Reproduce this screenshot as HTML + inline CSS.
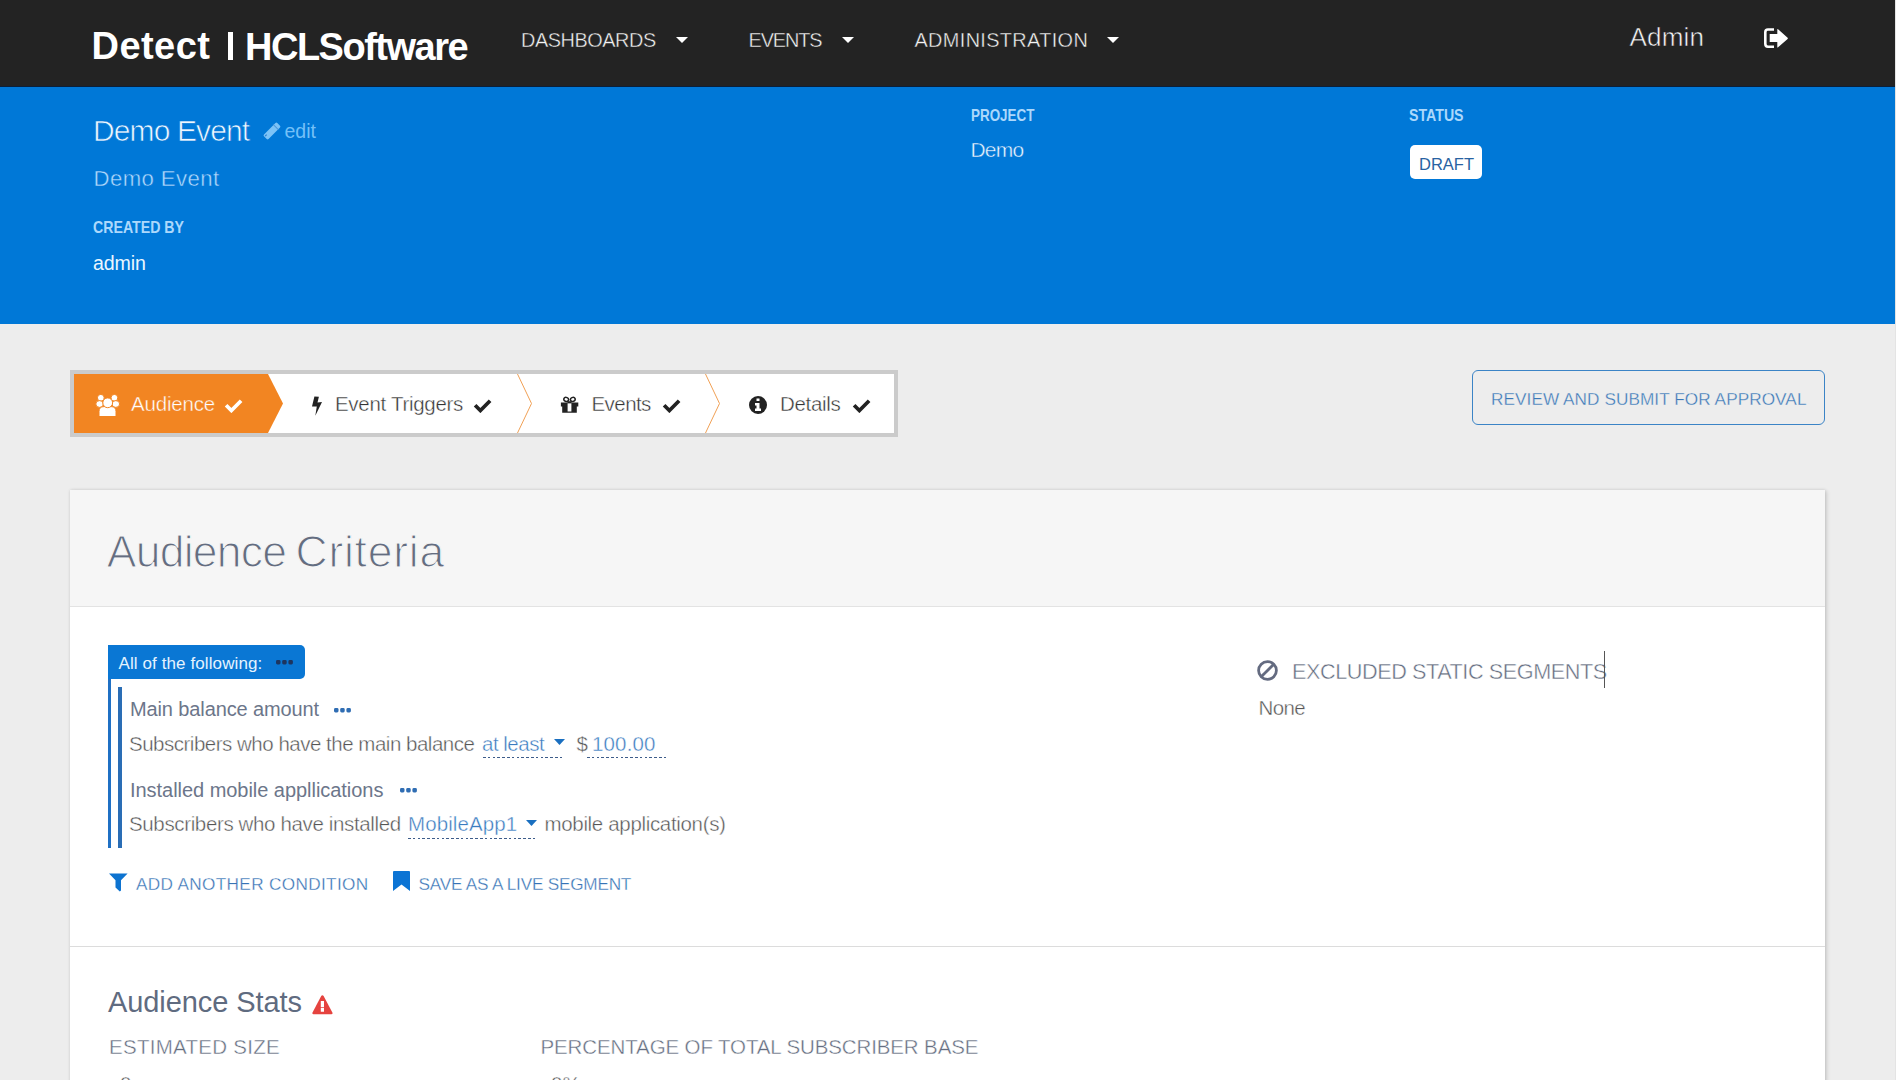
<!DOCTYPE html>
<html><head><meta charset="utf-8"><style>
html,body{margin:0;padding:0;width:1896px;height:1080px;overflow:hidden;background:#ededed;}
body{position:relative;font-family:"Liberation Sans", sans-serif;}
.t{position:absolute;white-space:nowrap;line-height:1;}
</style></head><body>
<div style="position:absolute;left:0px;top:0px;width:1895px;height:87px;background:#232323"></div>
<div style="position:absolute;left:1895px;top:0px;width:1px;height:1080px;background:#e4e4e4"></div>
<div style="position:absolute;left:0px;top:86px;width:1895px;height:1px;background:#0b1f3a"></div>
<div class="t" style="left:91.5px;top:26.83px;font-size:38px;color:#fff;font-weight:700;letter-spacing:0.45px;">Detect</div>
<div style="position:absolute;left:228px;top:32px;width:5px;height:28px;background:#fff"></div>
<div class="t" style="left:245px;top:28.33px;font-size:38px;color:#fff;font-weight:700;letter-spacing:-1.5px;">HCLSoftware</div>
<div class="t" style="left:521px;top:31.05px;font-size:19.9px;color:#f4f4f4;font-weight:400;letter-spacing:-0.45px;-webkit-text-stroke:0.4px #232323;">DASHBOARDS</div>
<div class="t" style="left:748.5px;top:31.05px;font-size:19.9px;color:#f4f4f4;font-weight:400;letter-spacing:-1.1px;-webkit-text-stroke:0.4px #232323;">EVENTS</div>
<div class="t" style="left:914.5px;top:31.05px;font-size:19.9px;color:#f4f4f4;font-weight:400;letter-spacing:0.35px;-webkit-text-stroke:0.4px #232323;">ADMINISTRATION</div>
<svg style="position:absolute;left:676px;top:37px;" width="12" height="6" viewBox="0 0 12 6"><path d="M0 0H12L6 6Z" fill="#fff"/></svg>
<svg style="position:absolute;left:842px;top:37px;" width="12" height="6" viewBox="0 0 12 6"><path d="M0 0H12L6 6Z" fill="#fff"/></svg>
<svg style="position:absolute;left:1107px;top:37px;" width="12" height="6" viewBox="0 0 12 6"><path d="M0 0H12L6 6Z" fill="#fff"/></svg>
<div class="t" style="left:1629.5px;top:24.11px;font-size:26.1px;color:#f4f4f4;font-weight:400;letter-spacing:0.15px;-webkit-text-stroke:0.55px #232323;">Admin</div>
<svg style="position:absolute;left:1764px;top:28px;" width="25" height="21" viewBox="0 0 25 21"><path d="M10 1.5H4Q1.3 1.5 1.3 4.2V15.8Q1.3 18.7 4 18.7H10" fill="none" stroke="#fff" stroke-width="2.6"/><path d="M5.7 6.1H13.3V1.4Q13.3 0.5 14.1 1.2L23.6 9.7Q24.2 10.3 23.6 10.9L14.1 19.2Q13.3 19.9 13.3 19V14.1H5.7Z" fill="#fff"/></svg>
<div style="position:absolute;left:0px;top:87px;width:1895px;height:237px;background:#0078d7"></div>
<div class="t" style="left:93px;top:115.80px;font-size:30px;color:#eef8ff;font-weight:400;letter-spacing:-0.89px;-webkit-text-stroke:0.7px #0078d7;">Demo Event</div>
<svg style="position:absolute;left:262px;top:121px;" width="20" height="20" viewBox="0 0 20 20"><g transform="rotate(45 10 10)"><rect x="6.8" y="0.6" width="6.4" height="18.8" rx="1.3" fill="#7cc3f7"/><rect x="6.5" y="4.1" width="7" height="0.9" fill="#4a95d8"/><rect x="8.2" y="16.4" width="1.2" height="2" fill="#2a7ccc"/></g></svg>
<div class="t" style="left:284.5px;top:122.09px;font-size:19.5px;color:#74c0f7;font-weight:400;letter-spacing:0px;">edit</div>
<div class="t" style="left:93.5px;top:168.01px;font-size:22.2px;color:#b0dafc;font-weight:400;letter-spacing:0.4px;-webkit-text-stroke:0.45px #0078d7;">Demo Event</div>
<div class="t" style="left:92.5px;top:219.29px;font-size:16.2px;color:#acd8fc;font-weight:700;letter-spacing:0px;transform:scaleX(0.875);transform-origin:0 0;">CREATED BY</div>
<div class="t" style="left:93px;top:254.41px;font-size:19.6px;color:#eaf6ff;font-weight:400;letter-spacing:-0.1px;">admin</div>
<div class="t" style="left:970.5px;top:107.29px;font-size:16.2px;color:#acd8fc;font-weight:700;letter-spacing:0px;transform:scaleX(0.83);transform-origin:0 0;">PROJECT</div>
<div class="t" style="left:970.5px;top:139.42px;font-size:21px;color:#f0f8ff;font-weight:400;letter-spacing:-0.8px;-webkit-text-stroke:0.45px #0078d7;">Demo</div>
<div class="t" style="left:1408.5px;top:107.29px;font-size:16.2px;color:#acd8fc;font-weight:700;letter-spacing:0px;transform:scaleX(0.875);transform-origin:0 0;">STATUS</div>
<div style="position:absolute;left:1410px;top:145px;width:72px;height:34px;background:#fff;border-radius:5px"></div>
<div class="t" style="left:1419px;top:156.03px;font-size:16.5px;color:#2862a2;font-weight:400;letter-spacing:0px;">DRAFT</div>
<div style="position:absolute;left:0px;top:324px;width:1895px;height:756px;background:#ededed"></div>
<div style="position:absolute;left:70px;top:370px;width:828px;height:67px;background:#cbcbcb"></div>
<div style="position:absolute;left:74px;top:374px;width:820px;height:59px;background:#fff"></div>
<svg style="position:absolute;left:74px;top:374px;" width="215" height="59" viewBox="0 0 215 59"><path d="M0 0H194L209 29.5L194 59H0Z" fill="#f28522"/></svg>
<svg style="position:absolute;left:517px;top:374px;" width="16" height="59" viewBox="0 0 16 59"><path d="M0.5 0L14.5 29.5L0.5 59" fill="none" stroke="#f0a055" stroke-width="1"/></svg>
<svg style="position:absolute;left:705px;top:374px;" width="16" height="59" viewBox="0 0 16 59"><path d="M0.5 0L14.5 29.5L0.5 59" fill="none" stroke="#f0a055" stroke-width="1"/></svg>
<svg style="position:absolute;left:95px;top:394px;" width="25" height="23" viewBox="0 0 25 23"><g fill="#fff" stroke="#f28522" stroke-width="1"><circle cx="5.8" cy="3.8" r="3.4"/><circle cx="19.4" cy="3.8" r="3.4"/><ellipse cx="4.6" cy="10" rx="3.8" ry="3.4"/><ellipse cx="20.8" cy="10" rx="3.8" ry="3.4"/><path d="M4 22.5V17.5Q4 12.6 9 12.6H16Q21 12.6 21 17.5V22.5Z"/><circle cx="12.7" cy="8.8" r="4.9"/></g></svg>
<div class="t" style="left:131px;top:394.05px;font-size:20.5px;color:#fff;font-weight:400;letter-spacing:-0.2px;-webkit-text-stroke:0.4px #f28522;">Audience</div>
<svg style="position:absolute;left:224px;top:399px;" width="19" height="14" viewBox="0 0 18 14"><path d="M1.6 6.2L6.9 11.5L16.6 1.8" fill="none" stroke="#fff" stroke-width="3.7"/></svg>
<svg style="position:absolute;left:311px;top:396px;" width="12" height="20" viewBox="0 0 12 20"><path d="M3.4 0.6L7.9 0.8L6.5 6.6L11 6.1L4.3 19.7L5.8 10.4L1 10.6Z" fill="#222"/></svg>
<div class="t" style="left:335px;top:394.05px;font-size:20.5px;color:#333;font-weight:400;letter-spacing:-0.3px;-webkit-text-stroke:0.4px #fff;">Event Triggers</div>
<svg style="position:absolute;left:473px;top:399px;" width="19" height="14" viewBox="0 0 18 14"><path d="M1.6 6.2L6.9 11.5L16.6 1.8" fill="none" stroke="#222" stroke-width="3.7"/></svg>
<svg style="position:absolute;left:560px;top:396px;" width="19" height="17" viewBox="0 0 19 17"><path d="M0.9 6.6H18.3V10.5H16.8V16.7H2.2V10.5H0.9Z" fill="#222"/><path d="M7.6 7.2H11.4V15.5H7.6Z" fill="#fff"/><g fill="none" stroke="#222" stroke-width="1.5"><ellipse cx="6.2" cy="3.4" rx="2.4" ry="2" transform="rotate(25 6.2 3.4)"/><ellipse cx="12.8" cy="3.4" rx="2.4" ry="2" transform="rotate(-25 12.8 3.4)"/></g><path d="M7.5 5.2H11.5V7.2H7.5Z" fill="#222"/></svg>
<div class="t" style="left:591.5px;top:394.05px;font-size:20.5px;color:#333;font-weight:400;letter-spacing:-0.56px;-webkit-text-stroke:0.4px #fff;">Events</div>
<svg style="position:absolute;left:662px;top:399px;" width="19" height="14" viewBox="0 0 18 14"><path d="M1.6 6.2L6.9 11.5L16.6 1.8" fill="none" stroke="#222" stroke-width="3.7"/></svg>
<svg style="position:absolute;left:749px;top:396px;" width="18" height="18" viewBox="0 0 18 18"><circle cx="9" cy="9" r="9" fill="#222"/><path d="M7.5 2.5H10.5V5H7.5Z M6 7H10.5V12.5H12V15H6V12.5H7.5V9.5H6Z" fill="#fff"/></svg>
<div class="t" style="left:780px;top:394.05px;font-size:20.5px;color:#333;font-weight:400;letter-spacing:-0.3px;-webkit-text-stroke:0.4px #fff;">Details</div>
<svg style="position:absolute;left:852px;top:399px;" width="19" height="14" viewBox="0 0 18 14"><path d="M1.6 6.2L6.9 11.5L16.6 1.8" fill="none" stroke="#222" stroke-width="3.7"/></svg>
<div style="position:absolute;left:1472px;top:370px;width:353px;height:55px;box-sizing:border-box;border:1.5px solid #3b84c6;border-radius:6px"></div>
<div class="t" style="left:1491px;top:391.04px;font-size:17.2px;color:#3a78b8;font-weight:400;letter-spacing:0.065px;-webkit-text-stroke:0.3px #ededed;">REVIEW AND SUBMIT FOR APPROVAL</div>
<div style="position:absolute;left:70px;top:490px;width:1755px;height:600px;background:#fff;box-shadow:0 0 3px rgba(0,0,0,0.12),2px 1px 4px rgba(0,0,0,0.12)"></div>
<div style="position:absolute;left:70px;top:490px;width:1755px;height:116px;background:#f6f6f6;border-bottom:1px solid #e3e3e3"></div>
<div class="t" style="left:106.8px;top:529.83px;font-size:44.5px;color:#646d80;font-weight:400;letter-spacing:-0.75px;-webkit-text-stroke:1.2px #f6f6f6;">Audience</div>
<div class="t" style="left:295.5px;top:529.83px;font-size:44.5px;color:#646d80;font-weight:400;letter-spacing:0.75px;-webkit-text-stroke:1.2px #f6f6f6;">Criteria</div>
<div style="position:absolute;left:108px;top:645px;width:197px;height:34px;background:#0a77d4;border-radius:0 5px 5px 0"></div>
<div class="t" style="left:118.5px;top:654.61px;font-size:17px;color:#e4f3ff;font-weight:400;letter-spacing:0.1px;">All of the following:</div>
<svg style="position:absolute;left:276px;top:660px;" width="17" height="5" viewBox="0 0 17 5"><g fill="#1d3560"><rect x="0" y="0" width="4.5" height="4.5" rx="1.4"/><rect x="6.2" y="0" width="4.5" height="4.5" rx="1.4"/><rect x="12.4" y="0" width="4.5" height="4.5" rx="1.4"/></g></svg>
<div style="position:absolute;left:108px;top:679px;width:3px;height:169px;background:#1f70c4"></div>
<div style="position:absolute;left:118px;top:687px;width:3.5px;height:161px;background:#2a6db5"></div>
<div class="t" style="left:130px;top:699.07px;font-size:20px;color:#6c768a;font-weight:400;letter-spacing:-0.12px;">Main balance amount</div>
<svg style="position:absolute;left:334px;top:707.5px;" width="17" height="5" viewBox="0 0 17 5"><g fill="#2f6db3"><rect x="0" y="0" width="4.5" height="4.5" rx="1.4"/><rect x="6.2" y="0" width="4.5" height="4.5" rx="1.4"/><rect x="12.4" y="0" width="4.5" height="4.5" rx="1.4"/></g></svg>
<div class="t" style="left:129px;top:734.05px;font-size:20.5px;color:#555;font-weight:400;letter-spacing:-0.49px;-webkit-text-stroke:0.4px #fff;">Subscribers who have the main balance</div>
<div class="t" style="left:482px;top:734.05px;font-size:20.5px;color:#3a7bbf;font-weight:400;letter-spacing:-0.5px;-webkit-text-stroke:0.4px #fff;">at least</div>
<svg style="position:absolute;left:554px;top:739px;" width="11" height="6" viewBox="0 0 11 6"><path d="M0 0H11L5.5 6Z" fill="#1a6fc0"/></svg>
<div style="position:absolute;left:483px;top:757px;width:82px;height:1px;background:repeating-linear-gradient(90deg,#3d5c8a 0 2.6px,transparent 2.6px 4.8px)"></div>
<div class="t" style="left:576.5px;top:734.05px;font-size:20.5px;color:#555;font-weight:400;letter-spacing:0px;-webkit-text-stroke:0.4px #fff;">$</div>
<div class="t" style="left:592px;top:734.05px;font-size:20.5px;color:#3a7bbf;font-weight:400;letter-spacing:0.15px;-webkit-text-stroke:0.4px #fff;">100.00</div>
<div style="position:absolute;left:587px;top:757px;width:80px;height:1px;background:repeating-linear-gradient(90deg,#3d5c8a 0 2.6px,transparent 2.6px 4.8px)"></div>
<div class="t" style="left:130px;top:780.07px;font-size:20px;color:#6c768a;font-weight:400;letter-spacing:-0.04px;">Installed mobile appllications</div>
<svg style="position:absolute;left:400px;top:787.5px;" width="17" height="5" viewBox="0 0 17 5"><g fill="#2f6db3"><rect x="0" y="0" width="4.5" height="4.5" rx="1.4"/><rect x="6.2" y="0" width="4.5" height="4.5" rx="1.4"/><rect x="12.4" y="0" width="4.5" height="4.5" rx="1.4"/></g></svg>
<div class="t" style="left:129px;top:814.05px;font-size:20.5px;color:#555;font-weight:400;letter-spacing:-0.36px;-webkit-text-stroke:0.4px #fff;">Subscribers who have installed</div>
<div class="t" style="left:408px;top:814.05px;font-size:20.5px;color:#3a7bbf;font-weight:400;letter-spacing:0.1px;-webkit-text-stroke:0.4px #fff;">MobileApp1</div>
<svg style="position:absolute;left:526px;top:819.5px;" width="11" height="6" viewBox="0 0 11 6"><path d="M0 0H11L5.5 6Z" fill="#1a6fc0"/></svg>
<div style="position:absolute;left:408px;top:838px;width:129px;height:1px;background:repeating-linear-gradient(90deg,#3d5c8a 0 2.6px,transparent 2.6px 4.8px)"></div>
<div class="t" style="left:544.5px;top:814.05px;font-size:20.5px;color:#555;font-weight:400;letter-spacing:-0.33px;-webkit-text-stroke:0.4px #fff;">mobile application(s)</div>
<svg style="position:absolute;left:109px;top:873px;" width="19" height="19" viewBox="0 0 19 19"><path d="M0 0.4H18.6L12 7.3V17.6L10.8 18.6L6.5 14.4V7.3Z" fill="#0d73d0"/></svg>
<div class="t" style="left:136px;top:875.74px;font-size:17.2px;color:#3673b5;font-weight:400;letter-spacing:0.34px;-webkit-text-stroke:0.3px #fff;">ADD ANOTHER CONDITION</div>
<svg style="position:absolute;left:393px;top:871px;" width="17" height="20" viewBox="0 0 17 20"><path d="M1 0H16Q17 0 17 1V20L8.5 13.5L0 20V1Q0 0 1 0Z" fill="#0c74d4"/></svg>
<div class="t" style="left:418.5px;top:875.74px;font-size:17.2px;color:#3673b5;font-weight:400;letter-spacing:-0.22px;-webkit-text-stroke:0.3px #fff;">SAVE AS A LIVE SEGMENT</div>
<svg style="position:absolute;left:1257px;top:660px;" width="21" height="21" viewBox="0 0 21 21"><circle cx="10.5" cy="10.5" r="8.9" fill="none" stroke="#646b80" stroke-width="2.8"/><path d="M4.2 16.8L16.8 4.2" stroke="#646b80" stroke-width="2.8"/></svg>
<div class="t" style="left:1292px;top:661.15px;font-size:22.5px;color:#646d80;font-weight:400;letter-spacing:-0.45px;transform:scaleX(0.962);transform-origin:0 0;-webkit-text-stroke:0.45px #fff;">EXCLUDED STATIC SEGMENTS</div>
<div style="position:absolute;left:1604px;top:651px;width:1px;height:37px;background:#555"></div>
<div class="t" style="left:1258.5px;top:698.05px;font-size:20.5px;color:#555;font-weight:400;letter-spacing:-0.6px;-webkit-text-stroke:0.4px #fff;">None</div>
<div style="position:absolute;left:70px;top:946px;width:1755px;height:1px;background:#dcdcdc"></div>
<div class="t" style="left:108px;top:988.25px;font-size:29px;color:#5f6b80;font-weight:400;letter-spacing:-0.08px;">Audience Stats</div>
<svg style="position:absolute;left:311px;top:995px;" width="22" height="20" viewBox="0 0 22 20"><path d="M11.4 0.3Q12.1 0.3 12.6 1.1L21.5 17.8Q21.9 19.2 20.6 19.2H2.3Q1 19.2 1.4 17.8L10.2 1.1Q10.7 0.3 11.4 0.3Z" fill="#e5433f"/><path d="M9.8 6H13V12.2H9.8Z M9.8 13H13V16.8H9.8Z" fill="#fff"/></svg>
<div class="t" style="left:109px;top:1036.85px;font-size:20.5px;color:#646d80;font-weight:400;letter-spacing:0.28px;-webkit-text-stroke:0.4px #fff;">ESTIMATED SIZE</div>
<div class="t" style="left:540.5px;top:1036.75px;font-size:20.5px;color:#646d80;font-weight:400;letter-spacing:-0.12px;-webkit-text-stroke:0.4px #fff;">PERCENTAGE OF TOTAL SUBSCRIBER BASE</div>
<div class="t" style="left:120px;top:1074.05px;font-size:20.5px;color:#555;font-weight:400;letter-spacing:0px;-webkit-text-stroke:0.4px #fff;">0</div>
<div class="t" style="left:551px;top:1074.05px;font-size:20.5px;color:#555;font-weight:400;letter-spacing:0px;-webkit-text-stroke:0.4px #fff;">0%</div>
</body></html>
